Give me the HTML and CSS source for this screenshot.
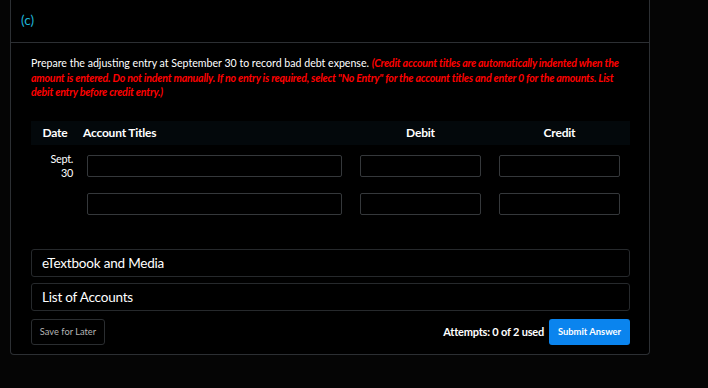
FILE: index.html
```html
<!DOCTYPE html>
<html>
<head>
<meta charset="utf-8">
<link rel="stylesheet" href="styles.css">
</head>
<body>
<div class="card">
  <div class="card-head"><span class="part">(c)</span></div>
  <div class="card-body">
    <p class="prompt">Prepare the adjusting entry at September 30 to record bad debt expense. <em class="warn">(Credit account titles are automatically indented when the amount is entered. Do not indent manually. If no entry is required, select "No Entry" for the account titles and enter 0 for the amounts. List debit entry before credit entry.)</em></p>

    <div class="journal">
      <div class="jrow jhead">
        <div class="c-date">Date</div>
        <div class="c-acct">Account Titles</div>
        <div class="c-amt">Debit</div>
        <div class="c-amt">Credit</div>
      </div>
      <div class="jrow">
        <div class="c-date date-val">Sept.<br>30</div>
        <div class="field"></div>
        <div class="field"></div>
        <div class="field"></div>
      </div>
      <div class="jrow">
        <div class="c-date"></div>
        <div class="field"></div>
        <div class="field"></div>
        <div class="field"></div>
      </div>
    </div>

    <div class="panel first">eTextbook and Media</div>
    <div class="panel">List of Accounts</div>

    <div class="actions">
      <button class="btn-save">Save for Later</button>
      <div class="right">
        <span class="attempts">Attempts: 0 of 2 used</span>
        <button class="btn-submit">Submit Answer</button>
      </div>
    </div>
  </div>
</div>
</body>
</html>
```
FILE: styles.css
```css
html, body {
  margin: 0;
  padding: 0;
  background: #050505;
  font-family: Lato, "Open Sans", sans-serif;
  color: #ffffff;
}
.card {
  margin-left: 10px;
  width: 640px;
  box-sizing: border-box;
  background: #000;
  border: 1px solid #2c2f33;
  border-top: none;
  border-radius: 0 0 4px 4px;
}
.card-head {
  height: 43px;
  box-sizing: border-box;
  padding-left: 10px;
  display: flex;
  align-items: center;
  border-bottom: 1px solid #2c2f33;
}
.part {
  color: #1eb4d8;
  font-size: 13.5px;
  position: relative;
  top: -1px;
}
.card-body {
  padding: 13px 19px 9px 20px;
}
.prompt {
  margin: 0;
  font-size: 10.6px;
  line-height: 14.5px;
  color: #fff;
}
.warn {
  color: #ff0000;
  font-weight: 700;
  font-style: italic;
  letter-spacing: -0.2px;
}
.journal {
  margin-top: 21px;
}
.jrow {
  display: grid;
  grid-template-columns: 48px 255px 131px 131px;
  column-gap: 8px;
  padding-right: 9px;
  margin-bottom: 16px;
}
.jrow > :nth-child(3),
.jrow > :nth-child(4) { margin-left: 10px; }
.jhead {
  background: #03080b;
  height: 24px;
  align-items: center;
  font-weight: 700;
  font-size: 12px;
  letter-spacing: -0.2px;
  margin-bottom: 10px;
}
.c-date { text-align: center; }
.c-acct { margin-left: -4px; }
.c-amt { text-align: center; }
.date-val {
  text-align: right;
  font-size: 10.8px;
  font-weight: 400;
  line-height: 14px;
  padding-right: 6px;
  margin-top: -3px;
  margin-bottom: -3px;
  letter-spacing: -0.3px;
}
.field {
  height: 22px;
  box-sizing: border-box;
  border: 1px solid #35383b;
  border-radius: 2px;
  background: #000;
}
.panel {
  height: 28px;
  box-sizing: border-box;
  border: 1px solid #26292c;
  border-radius: 3px;
  padding-left: 10px;
  display: flex;
  align-items: center;
  font-size: 13.5px;
  letter-spacing: -0.2px;
  margin-top: 6px;
}
.panel.first { margin-top: 34px; }
.actions {
  display: flex;
  justify-content: space-between;
  align-items: center;
  margin-top: 8px;
}
.right {
  display: flex;
  align-items: center;
  gap: 5px;
}
.attempts {
  font-size: 11px;
  font-weight: 700;
  letter-spacing: -0.2px;
}
button {
  font-family: Lato, "Open Sans", sans-serif;
  height: 26px;
  box-sizing: border-box;
  border-radius: 3px;
  cursor: pointer;
}
.btn-save {
  width: 74px;
  background: #000;
  border: 1px solid #2a2d30;
  color: #b4b4b4;
  font-size: 9.3px;
  padding: 0;
}
.btn-submit {
  width: 81px;
  background: #0a84ee;
  border: none;
  color: #fff;
  font-size: 9.4px;
  font-weight: 700;
  padding: 0;
}
```
